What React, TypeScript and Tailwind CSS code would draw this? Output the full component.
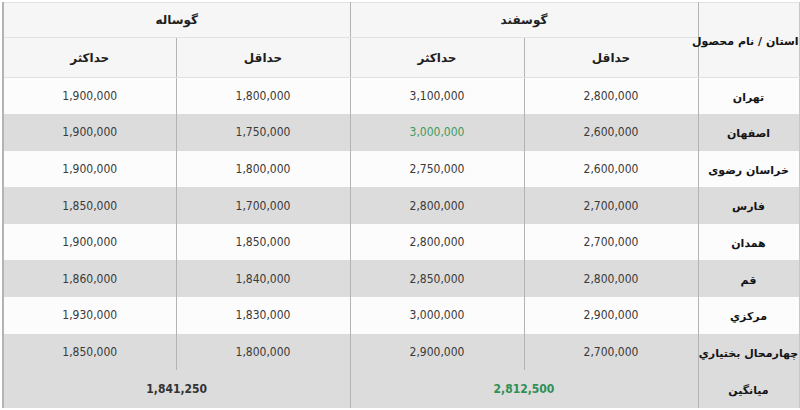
import React from 'react'

interface PriceRow {
  province: string
  sheepMin: string
  sheepMax: string
  calfMin: string
  calfMax: string
  highlight?: boolean
}

const rows: PriceRow[] = [
  { province: 'تهران', sheepMin: '2,800,000', sheepMax: '3,100,000', calfMin: '1,800,000', calfMax: '1,900,000' },
  { province: 'اصفهان', sheepMin: '2,600,000', sheepMax: '3,000,000', calfMin: '1,750,000', calfMax: '1,900,000', highlight: true },
  { province: 'خراسان رضوی', sheepMin: '2,600,000', sheepMax: '2,750,000', calfMin: '1,800,000', calfMax: '1,900,000' },
  { province: 'فارس', sheepMin: '2,700,000', sheepMax: '2,800,000', calfMin: '1,700,000', calfMax: '1,850,000' },
  { province: 'همدان', sheepMin: '2,700,000', sheepMax: '2,800,000', calfMin: '1,850,000', calfMax: '1,900,000' },
  { province: 'قم', sheepMin: '2,800,000', sheepMax: '2,850,000', calfMin: '1,840,000', calfMax: '1,860,000' },
  { province: 'مرکزي', sheepMin: '2,900,000', sheepMax: '3,000,000', calfMin: '1,830,000', calfMax: '1,930,000' },
  { province: 'چهارمحال بختياري', sheepMin: '2,700,000', sheepMax: '2,900,000', calfMin: '1,800,000', calfMax: '1,850,000' },
]

const num = "font-['DejaVu_Sans_Condensed','DejaVu_Sans',sans-serif] text-[12px] text-[#3a3a3a]"
const fa = "font-['DejaVu_Sans',sans-serif] font-bold text-[12px] text-[#1e1e1e]"
const side = "font-['DejaVu_Sans',sans-serif] font-bold text-[11px] text-[#141414] tracking-[-0.2px]"
const vline = 'border-l border-l-[#b4b4b4]'
const edge = 'border-l-2 border-l-[#b4b4b4]'
const hline = 'border-b border-b-[#e2e2e2]'

export default function App() {
  return (
    <div className="w-[800px] h-[410px] bg-white pt-[2px] pl-[2px]">
      <table dir="rtl" className="w-[796px] table-fixed border-collapse text-center">
        <colgroup>
          <col className="w-[101px]" />
          <col className="w-[174px]" />
          <col className="w-[174px]" />
          <col className="w-[174px]" />
          <col className="w-[173px]" />
        </colgroup>
        <thead>
          <tr className="h-[35px] bg-[#f6f6f6] border-t border-t-[#e2e2e2]">
            <th rowSpan={2} className={`${side} ${vline} border-r border-r-[#c8c8c8] ${hline} whitespace-nowrap pt-1`}>
              استان / نام محصول
            </th>
            <th colSpan={2} className={`${fa} ${vline} ${hline}`}>گوسفند</th>
            <th colSpan={2} className={`${fa} ${edge} ${hline}`}>گوساله</th>
          </tr>
          <tr className="h-[40px] bg-[#f6f6f6]">
            <th className={`${fa} ${vline} ${hline}`}>حداقل</th>
            <th className={`${fa} ${vline} ${hline}`}>حداکثر</th>
            <th className={`${fa} ${vline} ${hline}`}>حداقل</th>
            <th className={`${fa} ${edge} ${hline}`}>حداکثر</th>
          </tr>
        </thead>
        <tbody>
          {rows.map((r, i) => (
            <tr key={r.province} className={`h-[36.6px] ${i % 2 === 1 ? 'bg-[#dcdcdc]' : 'bg-[#fcfcfc]'}`}>
              <td className={`${side} ${vline} border-r border-r-[#c8c8c8] whitespace-nowrap pt-1`}>{r.province}</td>
              <td className={`${num} ${vline}`}>{r.sheepMin}</td>
              <td className={`${num} ${vline} ${r.highlight ? '!text-[#3c9a5c]' : ''}`}>{r.sheepMax}</td>
              <td className={`${num} ${vline}`}>{r.calfMin}</td>
              <td className={`${num} ${edge}`}>{r.calfMax}</td>
            </tr>
          ))}
          <tr className="h-[38px] bg-[#dcdcdc]">
            <td className={`${side} ${vline} border-r border-r-[#c8c8c8] pt-1`}>میانگین</td>
            <td colSpan={2} className={`${num} ${vline} font-bold !text-[#2f8f55]`}>2,812,500</td>
            <td colSpan={2} className={`${num} ${edge} font-bold !text-[#333]`}>1,841,250</td>
          </tr>
        </tbody>
      </table>
    </div>
  )
}
